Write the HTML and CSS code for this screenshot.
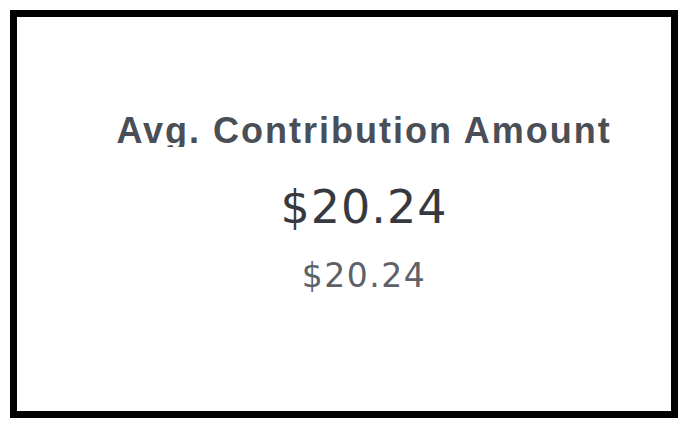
FILE: index.html
```html
<!DOCTYPE html>
<html>
<head>
  <meta charset="UTF-8">
  <title>Avg. Contribution Amount</title>
  <link rel="stylesheet" href="styles.css">
</head>
<body>
  <div class="frame">
    <div class="stat">
      <div class="stat-label">Avg. Contribution Amount</div>
      <div class="stat-value">$20.24</div>
      <div class="stat-sub">$20.24</div>
    </div>
  </div>
</body>
</html>
```

FILE: styles.css
```css
body {
  margin: 0;
  background: #fff;
  font-family: "Liberation Sans", Arial, sans-serif;
}
.frame {
  margin: 10px 8px 14px 10px;
  height: 394px;
  border: 7px solid #000;
  background: #fff;
}
.stat {
  display: flex;
  flex-direction: column;
  align-items: center;
  padding: 96px 0 0 40px;
}
.stat-label {
  font-size: 36px;
  font-weight: 700;
  color: #4a4f57;
  line-height: 36px;
  height: 34px;
  overflow: hidden;
  letter-spacing: 2px;
}
.stat-value,
.stat-sub {
  font-family: "DejaVu Sans", "Liberation Sans", sans-serif;
}
.stat-value {
  margin-top: 37px;
  font-size: 46px;
  color: #363a40;
  line-height: 46px;
  letter-spacing: 1px;
}
.stat-sub {
  margin-top: 29px;
  font-size: 33px;
  color: #5d6168;
  line-height: 33px;
  letter-spacing: 1.5px;
}
```
